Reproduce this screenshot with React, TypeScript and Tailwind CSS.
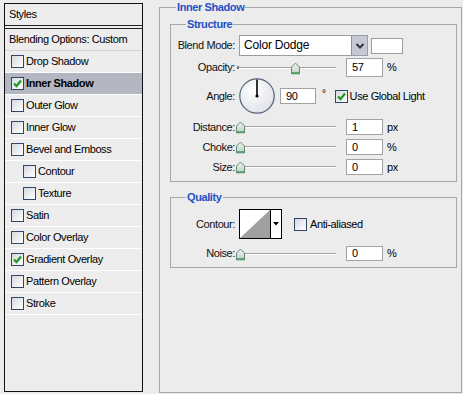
import React from 'react';

const styleRows: { label: string; checked?: boolean; active?: boolean; indent?: boolean }[] = [
  { label: 'Drop Shadow' },
  { label: 'Inner Shadow', checked: true, active: true },
  { label: 'Outer Glow' },
  { label: 'Inner Glow' },
  { label: 'Bevel and Emboss' },
  { label: 'Contour', indent: true },
  { label: 'Texture', indent: true },
  { label: 'Satin' },
  { label: 'Color Overlay' },
  { label: 'Gradient Overlay', checked: true },
  { label: 'Pattern Overlay' },
  { label: 'Stroke' },
];

function Check({ checked }: { checked?: boolean }) {
  return (
    <span className="flex h-[13px] w-[13px] shrink-0 items-center justify-center border border-[#2f4866] bg-linear-to-br from-[#d6d9e0] to-white">
      {checked && (
        <svg width="11" height="11" viewBox="0 0 11 11">
          <path d="M2 5.5 L4.5 8 L9 2.5" fill="none" stroke="#1f9a1f" strokeWidth="2.2" />
        </svg>
      )}
    </span>
  );
}

function Thumb() {
  return (
    <svg width="9" height="12" viewBox="0 0 9 12">
      <defs>
        <linearGradient id="tg" x1="0" y1="0" x2="0" y2="1">
          <stop offset="0" stopColor="#f2f4f2" />
          <stop offset="1" stopColor="#b9d2bd" />
        </linearGradient>
      </defs>
      <path d="M0.5 4.5 L4.5 0.5 L8.5 4.5 V11.5 H0.5 Z" fill="url(#tg)" stroke="#6a8577" />
      <path d="M1 10.5 H8" stroke="#3f9a5a" strokeWidth="1.5" />
    </svg>
  );
}

// track runs 243..341 in the picture; pos is thumb centre from track start
function Slider({ pos }: { pos: number }) {
  return (
    <div className="relative h-full w-[105px] shrink-0">
      <div className="absolute left-[3px] top-1/2 h-[2px] w-[98px] -translate-y-1/2 border-t border-b border-t-[#a3a3a3] border-b-white">
        <span className="absolute -left-[1px] -top-[2px] h-[3px] w-[2px] bg-[#777]" />
      </div>
      <div className="absolute top-1/2 -translate-y-[45%]" style={{ left: 3 + pos - 4 }}>
        <Thumb />
      </div>
    </div>
  );
}

function NumBox({ value, h = 16, w = 37 }: { value: string; h?: number; w?: number }) {
  return (
    <div
      className="flex shrink-0 items-center border border-[#a2a2a2] bg-white pl-[5px] text-black"
      style={{ height: h, width: w }}
    >
      {value}
    </div>
  );
}

function Label({ children }: { children: React.ReactNode }) {
  return <span className="w-[64px] shrink-0 text-right text-[#111]">{children}</span>;
}

export default function App() {
  return (
    <div className="flex h-[394px] w-[463px] overflow-hidden bg-[#ececec] font-['Liberation_Sans',Arial,sans-serif] text-[11px] leading-[13px] tracking-[-0.4px] text-black">
      {/* Styles list */}
      <div className="ml-[4px] mt-[3px] flex h-[389px] w-[139px] shrink-0 flex-col border border-[#111] bg-[#ededed]">
        <div className="flex h-[25px] items-center border-b-4 border-double border-[#222] pl-[4px]">Styles</div>
        <div className="flex h-[22px] items-center border-b border-[#d4d4d4] pl-[4px]">Blending Options: Custom</div>
        {styleRows.map((r) => (
          <div
            key={r.label}
            className={`flex h-[22px] shrink-0 items-center gap-[2px] border-b border-white ${r.indent ? 'pl-[18px]' : 'pl-[6px]'} ${r.active ? 'bg-[#b4b7c1] font-bold' : ''}`}
          >
            <Check checked={r.checked} />
            <span>{r.label}</span>
          </div>
        ))}
      </div>

      {/* Settings */}
      <fieldset className="ml-[16px] mt-[1px] h-[392px] w-[303px] shrink-0 border border-[#a7a7a7] p-0">
        <legend className="ml-[16px] px-[1px] font-bold text-[#2450c4]">Inner Shadow</legend>

        <fieldset className="ml-[10px] mt-[4px] h-[164px] w-[287px] border border-[#a7a7a7] p-0">
          <legend className="ml-[15px] px-[1px] font-bold text-[#2450c4]">Structure</legend>
          <div className="flex flex-col pt-[4px]">
            <div className="flex h-[21px] items-center">
              <Label>Blend Mode:</Label>
              <div className="ml-[4px] flex h-[21px] w-[129px] items-center border border-[#9d9d9d] bg-white">
                <span className="flex-1 pl-[4px] text-[12px] tracking-[-0.2px]">Color Dodge</span>
                <span className="flex h-[19px] w-[16px] items-center justify-center border-l border-[#8d90a0] bg-[#c6c8d3]">
                  <svg width="10" height="8" viewBox="0 0 10 8">
                    <path d="M1.5 2 L5 5.5 L8.5 2" fill="none" stroke="#333" strokeWidth="2" />
                  </svg>
                </span>
              </div>
              <span className="ml-[3px] h-[16px] w-[32px] border border-[#9d9d9d] bg-white" />
            </div>

            <div className="mt-[2px] flex h-[19px] items-center">
              <Label>Opacity:</Label>
              <Slider pos={57} />
              <span className="ml-[6px]">
                <NumBox value="57" h={19} />
              </span>
              <span className="ml-[4px]">%</span>
            </div>

            <div className="mt-[1px] flex h-[36px] items-center">
              <Label>Angle:</Label>
              <svg className="ml-[4px] shrink-0" width="36" height="36" viewBox="0 0 36 36">
                <defs>
                  <radialGradient id="dial" cx="0.4" cy="0.35" r="0.7">
                    <stop offset="0" stopColor="#ffffff" />
                    <stop offset="1" stopColor="#dfe1e8" />
                  </radialGradient>
                </defs>
                <circle cx="18" cy="18" r="17.2" fill="url(#dial)" stroke="#56637e" strokeWidth="1.2" />
                <path d="M18 18 V1.5" stroke="#000" strokeWidth="1.6" />
                <circle cx="18" cy="18" r="1.6" fill="#000" />
              </svg>
              <span className="ml-[5px]">
                <NumBox value="90" w={36} />
              </span>
              <span className="ml-[6px] -mt-[6px] text-[10px]">°</span>
              <span className="ml-[9px] flex items-center gap-[2px]">
                <Check checked />
                <span>Use Global Light</span>
              </span>
            </div>

            <div className="mt-[5px] flex h-[16px] items-center">
              <Label>Distance:</Label>
              <Slider pos={2} />
              <span className="ml-[6px]">
                <NumBox value="1" />
              </span>
              <span className="ml-[4px]">px</span>
            </div>

            <div className="mt-[4px] flex h-[16px] items-center">
              <Label>Choke:</Label>
              <Slider pos={2} />
              <span className="ml-[6px]">
                <NumBox value="0" />
              </span>
              <span className="ml-[4px]">%</span>
            </div>

            <div className="mt-[4px] flex h-[16px] items-center">
              <Label>Size:</Label>
              <Slider pos={2} />
              <span className="ml-[6px]">
                <NumBox value="0" />
              </span>
              <span className="ml-[4px]">px</span>
            </div>
          </div>
        </fieldset>

        <fieldset className="ml-[10px] mt-[9px] h-[77px] w-[287px] border border-[#a7a7a7] p-0">
          <legend className="ml-[15px] px-[1px] font-bold text-[#2450c4]">Quality</legend>
          <div className="flex flex-col pt-[5px]">
            <div className="flex h-[30px] items-center">
              <Label>Contour:</Label>
              <div className="ml-[4px] flex h-[30px] w-[43px] border border-black bg-white">
                <svg width="30" height="28" viewBox="0 0 30 28" className="shrink-0">
                  <polygon points="0,28 30,0 30,28" fill="#a0a0a0" />
                </svg>
                <span className="flex flex-1 items-center justify-center border-l border-black">
                  <svg width="6" height="4" viewBox="0 0 6 4">
                    <polygon points="0,0 6,0 3,3.5" fill="#000" />
                  </svg>
                </span>
              </div>
              <span className="ml-[12px] flex items-center gap-[3px]">
                <Check />
                <span>Anti-aliased</span>
              </span>
            </div>

            <div className="mt-[7px] flex h-[15px] items-center">
              <Label>Noise:</Label>
              <Slider pos={2} />
              <span className="ml-[6px]">
                <NumBox value="0" h={15} />
              </span>
              <span className="ml-[4px]">%</span>
            </div>
          </div>
        </fieldset>
      </fieldset>
    </div>
  );
}
